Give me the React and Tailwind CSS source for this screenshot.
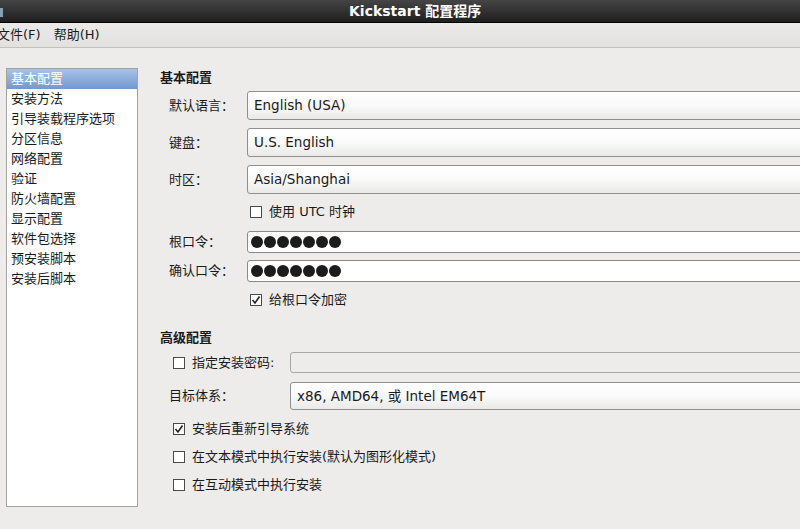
const font = { fontFamily: '"DejaVu Sans", "Noto Sans CJK SC", sans-serif' };

const navItems = ["基本配置","安装方法","引导装载程序选项","分区信息","网络配置","验证","防火墙配置","显示配置","软件包选择","预安装脚本","安装后脚本"];

const Check = ({checked}) => (
  <div className="w-[12px] h-[12px] border border-[#4a4a4a] bg-white flex items-center justify-center shrink-0">
    {checked && (
      <svg width="10" height="10" viewBox="0 0 10 10"><path d="M1.5 5 L4 8 L8.5 1.5" stroke="#222" strokeWidth="1.6" fill="none"/></svg>
    )}
  </div>
);

const Combo = ({text, h = "h-[29px]"}) => (
  <div className={`${h} w-[620px] border border-[#8f8f8f] rounded-[3px] bg-gradient-to-b from-white via-[#fafafa] to-[#e9e9e8] flex items-center pl-[6px] text-[13.5px] text-[#1a1a1a]`}>
    {text}
  </div>
);

const Dots = () => (
  <div className="h-[22px] w-[620px] border border-[#8a8a8a] rounded-[3px] bg-white flex items-center pl-[3px] gap-[1px]">
    {[0,1,2,3,4,5,6].map(i => <div key={i} className="w-[12px] h-[12px] rounded-full bg-[#1c1c1c]"></div>)}
  </div>
);

export default function App(){
  return (
    <div style={font} className="w-[800px] h-[529px] overflow-hidden bg-[#edeceb] flex flex-col text-[13px] text-[#1a1a1a]">
      <div className="h-[23px] shrink-0 bg-gradient-to-b from-[#454545] to-[#1f1f1f] border-b border-black flex items-center relative">
        <div className="absolute left-0 top-[8px] w-[3px] h-[9px] bg-[#8aa0b0]"></div>
        <div className="pl-[349px] text-white font-bold text-[14px]">Kickstart 配置程序</div>
      </div>
      <div className="h-[25px] shrink-0 bg-gradient-to-b from-[#eceae8] to-[#e2e1de] border-b border-[#c3c2bf] flex items-center text-[13px]">
        <span className="ml-[-3px]">文件(F)</span>
        <span className="ml-[13px]">帮助(H)</span>
      </div>
      <div className="flex pt-[20px] pl-[6px]">
        <div className="w-[132px] h-[439px] border border-[#a3a2a0] bg-white shrink-0">
          {navItems.map((n,i) => (
            <div key={n} className={`h-[20px] pl-[4px] flex items-center ${i===0 ? "bg-gradient-to-b from-[#a8c3e8] to-[#7398cf] text-white" : ""}`}>{n}</div>
          ))}
        </div>
        <div className="pl-[22px] flex flex-col">
          <div className="h-[20px] flex items-center font-bold">基本配置</div>
          <div className="pl-[9px] flex flex-col">
            <div className="mt-[3px] flex items-center"><span className="w-[78px]">默认语言：</span><Combo text="English (USA)" /></div>
            <div className="mt-[8px] flex items-center"><span className="w-[78px]">键盘：</span><Combo text="U.S. English" /></div>
            <div className="mt-[8px] flex items-center"><span className="w-[78px]">时区：</span><Combo text="Asia/Shanghai" /></div>
            <div className="h-[20px] mt-[8px] flex items-center pl-[81px] gap-[7px]"><Check /><span>使用 UTC 时钟</span></div>
            <div className="mt-[9px] flex items-center"><span className="w-[78px]">根口令：</span><Dots /></div>
            <div className="mt-[7px] flex items-center"><span className="w-[78px]">确认口令：</span><Dots /></div>
            <div className="h-[20px] mt-[8px] flex items-center pl-[81px] gap-[7px]"><Check checked /><span>给根口令加密</span></div>
          </div>
          <div className="h-[20px] mt-[18px] flex items-center font-bold">高级配置</div>
          <div className="pl-[13px] flex flex-col">
            <div className="mt-[4px] flex items-center">
              <div className="w-[117px] flex items-center gap-[7px]"><Check /><span>指定安装密码:</span></div>
              <div className="h-[21px] w-[620px] border border-[#a8a7a5] rounded-[3px] bg-[#edeceb]"></div>
            </div>
            <div className="mt-[9px] flex items-center">
              <span className="w-[117px] ml-[-4px]">目标体系：</span>
              <div className="ml-[4px]"><Combo text="x86, AMD64, 或 Intel EM64T" h="h-[28px]" /></div>
            </div>
            <div className="h-[20px] mt-[9px] flex items-center gap-[7px]"><Check checked /><span>安装后重新引导系统</span></div>
            <div className="h-[20px] mt-[8px] flex items-center gap-[7px]"><Check /><span>在文本模式中执行安装(默认为图形化模式)</span></div>
            <div className="h-[20px] mt-[8px] flex items-center gap-[7px]"><Check /><span>在互动模式中执行安装</span></div>
          </div>
        </div>
      </div>
    </div>
  );
}
